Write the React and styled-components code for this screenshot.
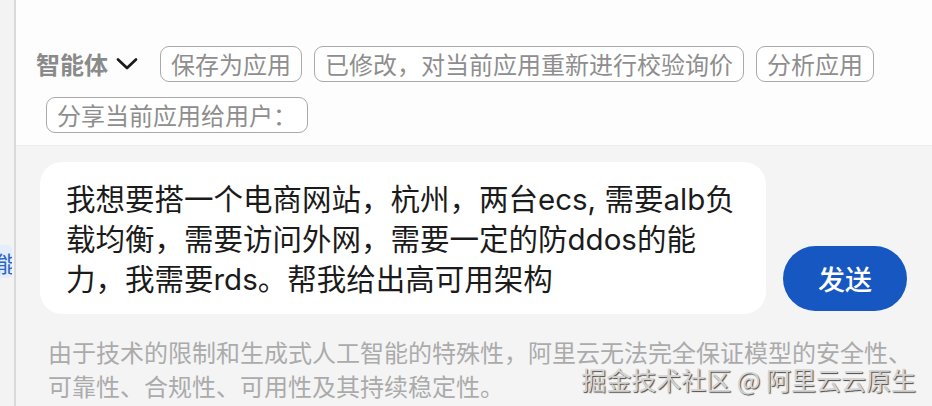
import styled, { createGlobalStyle } from "styled-components";

const GlobalStyle = createGlobalStyle`
	html, body {
		margin: 0;
		padding: 0;
		background: #fff;
		overflow: hidden;
	}
	body {
		font-family: "Noto Sans CJK SC", "Noto Sans", sans-serif;
	}
`;

const chips = [
	"保存为应用",
	"已修改，对当前应用重新进行校验询价",
	"分析应用",
	"分享当前应用给用户：",
];

const App = () => {
	return (
		<>
			<GlobalStyle />
			<Page>
				<Sidebar>
					<SideTag>
						<span>能</span>
					</SideTag>
				</Sidebar>
				<Main>
					<Header>
						<AgentSelect>
							智能体
							<svg width='22' height='14' viewBox='0 0 22 14'>
								<path
									d='M2 2.5 L11 11 L20 2.5'
									fill='none'
									stroke='#1a1a1a'
									strokeWidth='2.7'
									strokeLinecap='round'
									strokeLinejoin='round'
								/>
							</svg>
						</AgentSelect>
						{chips.map((c) => (
							<Chip key={c}>{c}</Chip>
						))}
					</Header>
					<Composer>
						<InputRow>
							<InputBox>
								我想要搭一个电商网站，杭州，两台ecs, 需要alb负
								<br />
								载均衡，需要访问外网，需要一定的防ddos的能
								<br />
								力，我需要rds。帮我给出高可用架构
							</InputBox>
							<SendButton>发送</SendButton>
						</InputRow>
						<Disclaimer>
							由于技术的限制和生成式人工智能的特殊性，阿里云无法完全保证模型的安全性、
							<br />
							可靠性、合规性、可用性及其持续稳定性。
						</Disclaimer>
						<Watermark>掘金技术社区 @ 阿里云云原生</Watermark>
					</Composer>
				</Main>
			</Page>
		</>
	);
};

const Page = styled.div`
	display: flex;
	width: 932px;
	height: 406px;
	overflow: hidden;
`;

const Sidebar = styled.div`
	width: 14px;
	flex-shrink: 0;
	background: #f3f3f4;
	border-right: 2px solid #d9d9db;
	padding-top: 245px;
	box-sizing: content-box;
`;

const SideTag = styled.div`
	display: flex;
	justify-content: flex-end;
	align-items: center;
	width: 12px;
	height: 33px;
	overflow: hidden;
	background: #e4edfb;
	border-radius: 0 4px 4px 0;

	span {
		flex-shrink: 0;
		font-size: 22px;
		color: #2a63c9;
		margin-right: -6px;
	}
`;

const Main = styled.div`
	flex: 1;
	display: flex;
	flex-direction: column;
	min-width: 0;
`;

const Header = styled.div`
	display: flex;
	flex-wrap: wrap;
	align-items: center;
	row-gap: 15px;
	column-gap: 12px;
	height: 146px;
	box-sizing: border-box;
	padding: 45px 20px 0 30px;
	align-content: flex-start;
	background: #fdfdfd;
	border-bottom: 1px solid #ececec;
`;

const AgentSelect = styled.div`
	display: flex;
	align-items: center;
	gap: 8px;
	margin-left: -10px;
	margin-right: 10px;
	font-size: 24px;
	font-weight: 700;
	color: #8a8a8a;
	line-height: 37px;

	svg {
		margin-top: 1px;
	}
`;

const Chip = styled.div`
	font-size: 24px;
	line-height: 34px;
	color: #8e8e8e;
	padding: 0 10px;
	border: 1.5px solid #a9a9a9;
	border-radius: 9px;
	background: #fff;
	white-space: nowrap;
`;

const Composer = styled.div`
	position: relative;
	flex: 1;
	background: #f4f4f5;
	padding: 16px 25px 0 24px;
`;

const InputRow = styled.div`
	display: flex;
	align-items: flex-end;
	gap: 17px;
`;

const InputBox = styled.div`
	flex: 1;
	height: 152px;
	box-sizing: border-box;
	padding: 17px 10px 15px 26px;
	background: #fff;
	border-radius: 22px;
	font-family: "Inter", "Noto Sans CJK SC", sans-serif;
	font-size: 29.5px;
	line-height: 40px;
	color: #1b1b1b;
	white-space: nowrap;
`;

const SendButton = styled.button`
	flex-shrink: 0;
	width: 124px;
	height: 65px;
	margin-bottom: 3px;
	border: none;
	border-radius: 33px;
	background: #1757c1;
	color: #fff;
	font-family: "Noto Sans CJK SC", sans-serif;
	font-size: 27px;
	font-weight: 500;
`;

const Disclaimer = styled.div`
	padding: 21px 0 0 8px;
	font-size: 24px;
	line-height: 34px;
	color: #ababab;
	white-space: nowrap;
`;

const Watermark = styled.div`
	position: absolute;
	right: 16px;
	bottom: 12px;
	font-size: 25px;
	line-height: 30px;
	color: #d4d4d4;
	text-shadow: 1px 1px 1px #4a4a4a;
	white-space: nowrap;
`;

export default App;
